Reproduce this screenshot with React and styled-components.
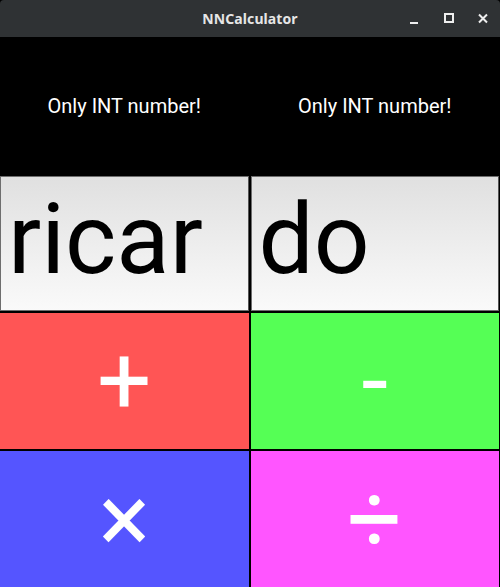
import React from "react";
import styled, { createGlobalStyle } from "styled-components";

const Global = createGlobalStyle`
  html, body { margin: 0; padding: 0; background: #000; }
  body { width: 500px; height: 587px; overflow: hidden; font-family: Roboto, "Liberation Sans", sans-serif; }
`;

const Window = styled.div`
  width: 500px;
  height: 587px;
  display: flex;
  flex-direction: column;
  background: #000;
`;

const TitleBar = styled.div`
  height: 37px;
  flex: none;
  background: #2f3234;
  border-radius: 4px 4px 0 0;
  position: relative;
  display: flex;
  align-items: center;
  justify-content: center;
`;

const Title = styled.div`
  color: #e6e6e6;
  font-family: "Noto Sans", "DejaVu Sans", sans-serif;
  font-weight: 700;
  font-size: 14px;
  letter-spacing: 0.1px;
`;

const Controls = styled.div`
  position: absolute;
  right: 0;
  top: 0;
  height: 37px;
  display: flex;
  align-items: center;
`;

const Ctrl = styled.div`
  width: 34px;
  height: 37px;
  display: flex;
  align-items: center;
  justify-content: center;
`;

const Grid = styled.div`
  flex: 1;
  display: grid;
  grid-template-columns: 1fr 1fr;
  grid-template-rows: 137px 135px 136px 136px;
  column-gap: 2px;
  row-gap: 2px;
  padding: 0 1px 1px 0;
  background: #000;
`;

const Label = styled.div`
  background: #000;
  color: #fff;
  font-size: 20px;
  display: flex;
  align-items: center;
  justify-content: center;
`;

const Input = styled.div`
  background: linear-gradient(#e0e0e0, #fafafa);
  border: 1px solid #6e6e6e;
  border-right-color: #555;
  color: #000;
  font-size: 98px;
  line-height: 1;
  padding: 14px 0 0 7px;
  box-sizing: border-box;
  overflow: hidden;
  white-space: nowrap;
`;

const OpButton = styled.div`
  background: ${(p) => p.$bg};
  color: #fff;
  display: flex;
  align-items: center;
  justify-content: center;
  font-size: ${(p) => p.$size || 96}px;
  line-height: 1;
  font-family: Roboto, "DejaVu Sans", sans-serif;
`;

export default function App() {
  return (
    <>
      <Global />
      <Window>
        <TitleBar>
          <Title>NNCalculator</Title>
          <Controls>
            <Ctrl>
              <svg width="12" height="12" viewBox="0 0 12 12">
                <rect x="1" y="9" width="8" height="2" fill="#eee" />
              </svg>
            </Ctrl>
            <Ctrl>
              <svg width="12" height="12" viewBox="0 0 12 12">
                <rect x="2" y="1" width="8" height="8" fill="none" stroke="#eee" strokeWidth="2" />
              </svg>
            </Ctrl>
            <Ctrl>
              <svg width="12" height="12" viewBox="0 0 12 12">
                <path d="M2 1.5 L10 9.5 M10 1.5 L2 9.5" stroke="#eee" strokeWidth="2" />
              </svg>
            </Ctrl>
          </Controls>
        </TitleBar>
        <Grid>
          <Label>Only INT number!</Label>
          <Label>Only INT number!</Label>
          <Input>ricar</Input>
          <Input>do</Input>
          <OpButton $bg="#ff5555">+</OpButton>
          <OpButton $bg="#55ff55">-</OpButton>
          <OpButton $bg="#5555ff">×</OpButton>
          <OpButton $bg="#ff55ff">÷</OpButton>
        </Grid>
      </Window>
    </>
  );
}
